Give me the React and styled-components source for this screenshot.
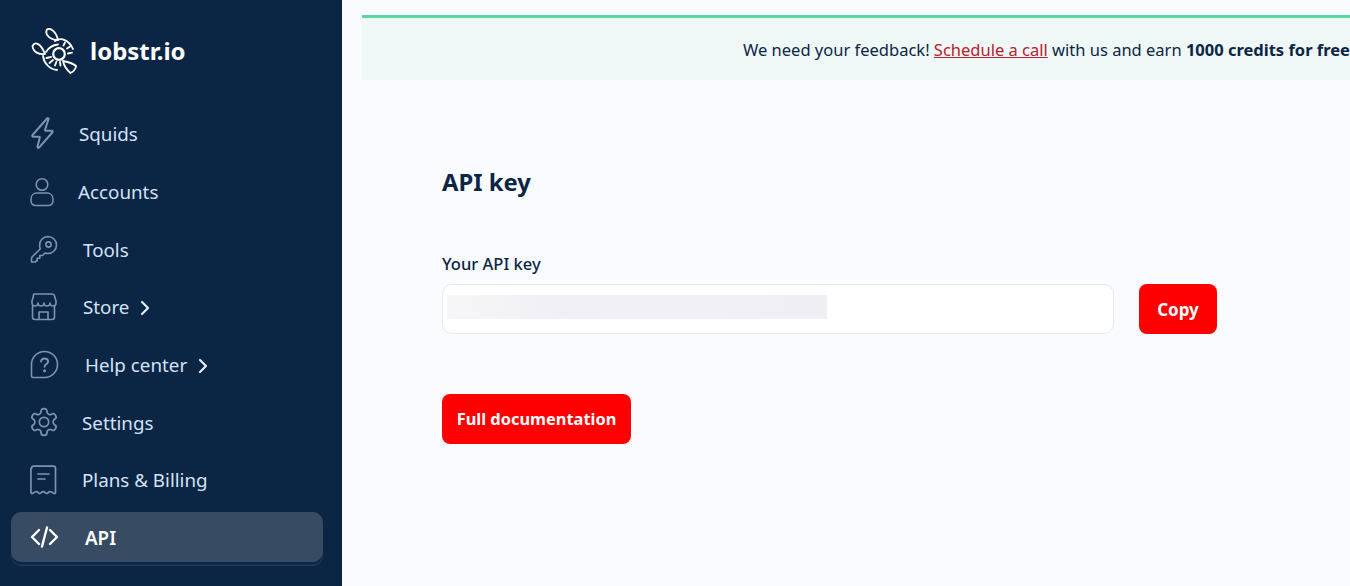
import React from "react";
import styled, { createGlobalStyle } from "styled-components";

const Global = createGlobalStyle`
  html, body { margin: 0; padding: 0; height: 586px; overflow: hidden; background: #f9fbff; }
  body { font-family: "Noto Sans", "Open Sans", sans-serif; }
  * { box-sizing: border-box; }
`;

const Page = styled.div`
  display: flex;
  width: 1350px;
  height: 586px;
  overflow: hidden;
`;

const Sidebar = styled.aside`
  width: 342px;
  flex: none;
  height: 586px;
  background: #0b2545;
  padding: 28px 19px 0 11px;
  display: flex;
  flex-direction: column;
`;

const Brand = styled.div`
  display: flex;
  align-items: center;
  gap: 13px;
  height: 46px;
  padding-left: 19px;
  color: #fff;
`;

const BrandName = styled.span`
  font-size: 24px;
  font-weight: 700;
  line-height: 1;
`;

const Nav = styled.nav`
  display: flex;
  flex-direction: column;
  gap: 7.6px;
  margin-top: 35px;
`;

const Item = styled.a`
  display: flex;
  align-items: center;
  height: 50px;
  width: 312px;
  padding: 2px 0 0 19px;
  border-radius: 10px;
  font-size: 18.8px;
  line-height: 1;
  color: ${(p) => (p.$active ? "#fff" : "#d3e2f6")};
  font-weight: ${(p) => (p.$active ? 600 : 400)};
  background: ${(p) => (p.$active ? "#374b63" : "transparent")};
  box-shadow: ${(p) => (p.$active ? "0 3px 0 -0.5px #0b2545, 0 4px 0 0 #23395a" : "none")};
  &:first-child { padding-top: 0; }
`;

const IconSlot = styled.span`
  width: ${(p) => p.$w}px;
  flex: none;
  display: flex;
  align-items: center;
  margin-top: -2px;
  color: ${(p) => (p.$active ? "#fff" : "#7f93ac")};
`;

const Chevron = styled.svg`
  width: 12px;
  height: 16px;
  margin-left: 10px;
  margin-top: 1px;
  color: #e3edfa;
`;

const Main = styled.main`
  flex: 1;
  min-width: 0;
  padding: 15px 0 0 20px;
`;

const Banner = styled.div`
  width: 1100px;
  height: 65px;
  border-top: 3px solid #5ad6a0;
  background: #eff8f6;
  padding: 21px 0 0 381px;
  font-size: 16.5px;
  line-height: 22px;
  white-space: nowrap;
  color: #0b2545;
`;

const CallLink = styled.a`
  color: #b4222c;
  text-decoration: underline;
`;

const Content = styled.section`
  padding: 86px 0 0 80px;
`;

const Title = styled.h1`
  margin: 0;
  font-size: 23.8px;
  line-height: 32px;
  font-weight: 700;
  color: #0b2545;
`;

const Label = styled.div`
  margin-top: 54px;
  font-size: 16.5px;
  line-height: 24px;
  font-weight: 500;
  color: #0b2545;
`;

const KeyRow = styled.div`
  display: flex;
  align-items: center;
  gap: 25px;
  margin-top: 8px;
`;

const KeyField = styled.div`
  width: 672px;
  height: 50px;
  background: #fff;
  border: 1px solid #e6e9f2;
  border-radius: 10px;
  padding: 10px 0 0 4px;
`;

const Redacted = styled.div`
  width: 380px;
  height: 24px;
  background: linear-gradient(90deg, #f6f6f9, #f0f0f4 30%, #f1f0f4 60%, #efeff3);
`;

const RedButton = styled.button`
  height: 50px;
  padding: 0;
  border: 0;
  border-radius: 8px;
  background: #ff0000;
  color: #fff;
  font-family: inherit;
  font-size: 17px;
  font-weight: 700;
  line-height: 1;
  white-space: nowrap;
`;

const CopyButton = styled(RedButton)`
  width: 78px;
`;

const DocsButton = styled(RedButton)`
  display: block;
  width: 189px;
  margin-top: 60px;
  font-size: 16.4px;
`;

const Stroke = ({ w = 30, h = 30, vb = "0 0 24 24", sw = 1.7, children }) => (
  <svg width={w} height={h} viewBox={vb} fill="none" stroke="currentColor" strokeWidth={sw} strokeLinecap="round" strokeLinejoin="round">
    {children}
  </svg>
);

const Logo = () => (
  <svg width="47" height="47" viewBox="0 0 47 47" fill="none" stroke="#fff" strokeWidth="1.800" strokeLinecap="round" strokeLinejoin="round">
    <path d="M17 1.500C20 -.5 26 3 28 12C21 12 14 7 17 1.500Z" />
    <path d="M2.500 18C4.500 14 10 13.500 15 26C9 27 3 24 2.500 18Z" />
    <path d="M33 33C38 34 43 35 46 38C46 41 43 44 40.500 45C37 42 34 38 33 33Z" />
    <path d="M25 13C31 9 39 12 43 21" />
    <path d="M13 28C14 35 19 41 27 42" />
    <path d="M16 24C19 19 23 17 28 16.500" />
    <circle cx="29" cy="26" r="5.800" strokeWidth="2.200" />
    <path d="M33.500 17.500l1.500-3M37 20.500l3-2M38 25.500l4-.8M21 29l-4.500 1M23 32l-3.500 3M26.500 33.500l-1.500 4M30 34l.5 3.500" />
  </svg>
);

const Bolt = () => (
  <Stroke w={26} h={34} vb="0 0 26 34" sw={2}>
    <path d="M17 2.500 2.500 19c-.6.8-.2 1.800.8 1.800H9c.8 0 1 .6.700 1.300L7.500 30.500c-.3 1.300 1 1.800 1.800.9l13-14.900c.7-.8.3-1.700-.7-1.700h-5.600c-.8 0-1.100-.5-.9-1.200L18.500 3.200c.3-1-.8-1.500-1.500-.7Z" />
  </Stroke>
);

const User = () => (
  <Stroke w={24} h={30} vb="0 0 24 30" sw={1.5}>
    <circle cx="12" cy="7.500" r="5.800" />
    <path d="M7 16h10c3.500 0 6 2.500 6 6v1.500c0 3-2 5-5 5H6c-3 0-5-2-5-5V22c0-3.500 2.500-6 6-6Z" />
  </Stroke>
);

const KeyIcon = () => (
  <Stroke w={28} h={28} vb="0 0 28 28" sw={1.6}>
    <path d="M18 1.500a8.500 8.500 0 0 1 0 17c-1 0-2-.2-3-.5l-2.500 2.500h-2.700v2.800H7.200V25.500L5 27H1.500v-3l.3-1.800L10.200 14c-.3-1-.5-2-.5-3.200A8.500 8.500 0 0 1 18 1.500Z" />
    <circle cx="18.500" cy="9.500" r="2.600" />
  </Stroke>
);

const StoreIcon = () => (
  <Stroke w={27} h={28} vb="0 0 27 28" sw={1.6}>
    <path d="M5 1h17c1.200 0 2 .6 2.500 1.700l1.500 5.300v2c0 1.700-1.200 3-3 3-1.500 0-3-1.300-3-3 0 1.700-1.300 3-3 3s-3-1.300-3-3c0 1.700-1.300 3-3 3s-3-1.300-3-3c0 1.700-1.500 3-3 3-1.800 0-3-1.300-3-3V8l1.500-5.300C3 1.600 3.800 1 5 1Z" />
    <path d="M2.500 13v11c0 1.500 1 2.500 2.500 2.500h17c1.500 0 2.500-1 2.500-2.500V13" />
    <path d="M9 26.500V19h9v7.500" />
  </Stroke>
);

const HelpIcon = () => (
  <Stroke w={29} h={29} vb="0 0 29 29" sw={1.6}>
    <path d="M14.500 1.500a13 13 0 0 1 0 26H3a1.500 1.500 0 0 1-1.500-1.500V14.500a13 13 0 0 1 13-13Z" />
    <path d="M11 11.500c.3-2 1.800-3 3.600-3 2 0 3.500 1.200 3.500 3 0 2.600-3.500 2.600-3.500 5.300" strokeWidth="1.900" />
    <circle cx="14.600" cy="20.700" r=".7" fill="currentColor" />
  </Stroke>
);

const GearShift = styled.span`
  display: flex;
  margin-left: -2px;
`;

const Gear = () => (
  <GearShift>
    <Stroke w={32} h={32} vb="0 0 24 24" sw={1.3}>
      <path d="M12.220 2h-.44a2 2 0 0 0-2 2v.18a2 2 0 0 1-1 1.730l-.43.250a2 2 0 0 1-2 0l-.15-.080a2 2 0 0 0-2.730.730l-.22.380a2 2 0 0 0 .730 2.730l.15.100a2 2 0 0 1 1 1.720v.510a2 2 0 0 1-1 1.740l-.15.090a2 2 0 0 0-.730 2.730l.22.380a2 2 0 0 0 2.730.730l.15-.080a2 2 0 0 1 2 0l.43.250a2 2 0 0 1 1 1.730V20a2 2 0 0 0 2 2h.44a2 2 0 0 0 2-2v-.18a2 2 0 0 1 1-1.730l.43-.250a2 2 0 0 1 2 0l.15.080a2 2 0 0 0 2.730-.730l.22-.390a2 2 0 0 0-.730-2.730l-.15-.080a2 2 0 0 1-1-1.740v-.5a2 2 0 0 1 1-1.740l.15-.090a2 2 0 0 0 .730-2.730l-.22-.380a2 2 0 0 0-2.730-.730l-.15.080a2 2 0 0 1-2 0l-.43-.250a2 2 0 0 1-1-1.730V4a2 2 0 0 0-2-2z" />
      <circle cx="12" cy="12" r="3.500" />
    </Stroke>
  </GearShift>
);

const Receipt = () => (
  <Stroke w={27} h={30} vb="0 0 27 30" sw={1.7}>
    <path d="M1.500 3.500c0-1.300 1-2.300 2.300-2.300h19.400c1.300 0 2.300 1 2.300 2.300v24c0 1-1 1.300-1.800.8-1.500-1-2.700-1.600-3.700-1.600-1.700 0-2.300 1.800-3.300 1.800-1.300 0-1.800-1.800-3.500-1.800s-2.200 1.800-3.500 1.800c-1 0-1.600-1.800-3.300-1.800-1 0-2.200.6-3.700 1.600-.8.500-1.800.2-1.800-.8v-24Z" />
    <path d="M8 9h11M8 14h7" />
  </Stroke>
);

const Code = () => (
  <Stroke w={29} h={22} vb="0 0 29 22" sw={2.400}>
    <path d="M9 4 2 11l7 7M20 4l7 7-7 7M17 1.500 12 20.500" />
  </Stroke>
);

const Chev = () => (
  <Chevron viewBox="0 0 12 16" fill="none" stroke="currentColor" strokeWidth="2.200" strokeLinecap="round" strokeLinejoin="round">
    <path d="M3 2 9 8l-6 6" />
  </Chevron>
);

const items = [
  { label: "Squids", icon: <Bolt />, w: 49 },
  { label: "Accounts", icon: <User />, w: 48 },
  { label: "Tools", icon: <KeyIcon />, w: 53 },
  { label: "Store", icon: <StoreIcon />, w: 53, more: true },
  { label: "Help center", icon: <HelpIcon />, w: 55, more: true },
  { label: "Settings", icon: <Gear />, w: 52 },
  { label: "Plans & Billing", icon: <Receipt />, w: 52 },
  { label: "API", icon: <Code />, w: 55, active: true },
];

export default function App() {
  return (
    <Page>
      <Global />
      <Sidebar>
        <Brand>
          <Logo />
          <BrandName>lobstr.io</BrandName>
        </Brand>
        <Nav>
          {items.map((it) => (
            <Item key={it.label} $active={it.active}>
              <IconSlot $w={it.w} $active={it.active}>{it.icon}</IconSlot>
              {it.label}
              {it.more && <Chev />}
            </Item>
          ))}
        </Nav>
      </Sidebar>
      <Main>
        <Banner>
          We need your feedback! <CallLink>Schedule a call</CallLink> with us and earn <b>1000 credits for free</b>
        </Banner>
        <Content>
          <Title>API key</Title>
          <Label>Your API key</Label>
          <KeyRow>
            <KeyField><Redacted /></KeyField>
            <CopyButton>Copy</CopyButton>
          </KeyRow>
          <DocsButton>Full documentation</DocsButton>
        </Content>
      </Main>
    </Page>
  );
}
